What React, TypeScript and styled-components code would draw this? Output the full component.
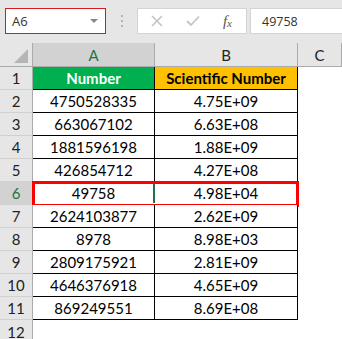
import React, { FunctionComponent } from 'react';
import styled, { createGlobalStyle } from 'styled-components';

const rows: [string, string][] = [
  ['4750528335', '4.75E+09'],
  ['663067102', '6.63E+08'],
  ['1881596198', '1.88E+09'],
  ['426854712', '4.27E+08'],
  ['49758', '4.98E+04'],
  ['2624103877', '2.62E+09'],
  ['8978', '8.98E+03'],
  ['2809175921', '2.81E+09'],
  ['4646376918', '4.65E+09'],
  ['869249551', '8.69E+08'],
];

const App: FunctionComponent = () => (
  <Sheet>
    <GlobalStyle />
    <FormulaBar>
      <NameBox>
        A6
        <DropArrow />
      </NameBox>
      <Grip>
        <i />
        <i />
        <i />
      </Grip>
      <ButtonBox>
        <svg width="12" height="12" viewBox="0 0 12 12">
          <path d="M1 1 L11 11 M11 1 L1 11" stroke="#c3c3c3" strokeWidth="1.6" fill="none" />
        </svg>
        <svg width="14" height="12" viewBox="0 0 14 12">
          <path d="M1 6 L5 10 L13 1.5" stroke="#c3c3c3" strokeWidth="1.8" fill="none" />
        </svg>
        <Fx>
          f<sub>x</sub>
        </Fx>
      </ButtonBox>
      <InputBox>49758</InputBox>
    </FormulaBar>

    <HeaderRow>
      <Corner>
        <svg width="16" height="16" viewBox="0 0 16 16">
          <path d="M15 1 L15 15 L1 15 Z" fill="#b5b5b5" />
        </svg>
      </Corner>
      <ColHead width={122} active>
        A
      </ColHead>
      <ColHead width={143}>B</ColHead>
      <ColHead width={44}>C</ColHead>
    </HeaderRow>

    <Row>
      <RowHead>1</RowHead>
      <Cell width={122} bg="#00b050" color="#ffffff" bold>
        Number
      </Cell>
      <Cell width={143} bg="#ffc000" bold>
        Scientific Number
      </Cell>
    </Row>
    {rows.map(([num, sci], i) => {
      const n = i + 2;
      const selected = n === 6;
      return (
        <Row key={n}>
          <RowHead active={selected}>{n}</RowHead>
          <Cell width={122}>
            {num}
            {selected && <SelectEdge />}
          </Cell>
          <Cell width={143}>{sci}</Cell>
          {selected && <Highlight />}
        </Row>
      );
    })}
    <Row>
      <RowHead plain>12</RowHead>
    </Row>
  </Sheet>
);

const GlobalStyle = createGlobalStyle`
  html, body {
    margin: 0;
    padding: 0;
    background: #ffffff;
    overflow: hidden;
  }
`;

const Sheet = styled.div`
  width: 342px;
  height: 339px;
  overflow: hidden;
  font-family: Lato, 'Open Sans', sans-serif;
`;

const FormulaBar = styled.div`
  height: 43px;
  background: #e6e6e6;
  display: flex;
  align-items: flex-start;
  padding-top: 8px;
  box-sizing: border-box;
  font-family: 'Open Sans', sans-serif;
  font-size: 12.5px;
  color: #333333;
`;

const NameBox = styled.div`
  margin-left: 5px;
  width: 101px;
  height: 26px;
  box-sizing: border-box;
  border: 1px solid #d41a1a;
  background: #ffffff;
  display: flex;
  align-items: center;
  justify-content: space-between;
  padding: 0 6px 0 6px;
  font-size: 13px;
`;

const DropArrow = styled.span`
  width: 0;
  height: 0;
  border-left: 4px solid transparent;
  border-right: 4px solid transparent;
  border-top: 4px solid #888888;
  margin-right: 1px;
`;

const Grip = styled.div`
  width: 31px;
  height: 26px;
  display: flex;
  flex-direction: column;
  align-items: center;
  justify-content: center;
  gap: 3px;

  i {
    width: 2px;
    height: 2px;
    background: #b4b4b4;
  }
`;

const ButtonBox = styled.div`
  width: 110px;
  height: 26px;
  box-sizing: border-box;
  border: 1px solid #d4d4d4;
  background: #ffffff;
  display: flex;
  align-items: center;
  justify-content: space-between;
  padding: 0 14px 0 13px;
`;

const Fx = styled.span`
  font-family: 'Liberation Serif', serif;
  font-style: italic;
  font-size: 15px;
  color: #555555;
  line-height: 1;

  sub {
    font-size: 11px;
    vertical-align: -1px;
  }
`;

const InputBox = styled.div`
  margin-left: 3px;
  flex: 1;
  height: 26px;
  box-sizing: border-box;
  border: 1px solid #d4d4d4;
  border-right: none;
  background: #ffffff;
  display: flex;
  align-items: center;
  padding-left: 11px;
`;

const HeaderRow = styled.div`
  display: flex;
  height: 23px;
  background: #e6e6e6;
  border-bottom: 1px solid #ababab;
  font-size: 15px;
  color: #222222;
`;

const Corner = styled.div`
  width: 33px;
  box-sizing: border-box;
  border-right: 1px solid #ababab;
  display: flex;
  align-items: flex-end;
  justify-content: flex-end;
  padding: 0 3px 2px 0;
`;

const ColHead = styled.div<{ width: number; active?: boolean }>`
  width: ${(p) => p.width}px;
  flex-shrink: 0;
  box-sizing: border-box;
  border-right: 1px solid #ababab;
  background: ${(p) => (p.active ? '#d2d2d2' : '#e6e6e6')};
  color: ${(p) => (p.active ? '#217346' : '#222222')};
  display: flex;
  align-items: center;
  justify-content: center;
`;

const Row = styled.div`
  position: relative;
  display: flex;
  height: 23px;
  font-size: 15px;
`;

const RowHead = styled.div<{ active?: boolean; plain?: boolean }>`
  width: 33px;
  flex-shrink: 0;
  box-sizing: border-box;
  border-right: 1px solid #ababab;
  border-bottom: ${(p) => (p.plain ? 'none' : '1px solid #d0d0d0')};
  background: ${(p) => (p.active ? '#d2d2d2' : '#e6e6e6')};
  color: ${(p) => (p.active ? '#217346' : '#222222')};
  display: flex;
  align-items: center;
  justify-content: center;
`;

const Cell = styled.div<{ width: number; bg?: string; color?: string; bold?: boolean }>`
  position: relative;
  width: ${(p) => p.width}px;
  flex-shrink: 0;
  box-sizing: border-box;
  border-right: 1px solid #000000;
  border-bottom: 1px solid #000000;
  background: ${(p) => p.bg ?? '#ffffff'};
  color: ${(p) => p.color ?? '#000000'};
  font-weight: ${(p) => (p.bold ? 700 : 400)};
  display: flex;
  align-items: center;
  justify-content: center;
`;

const SelectEdge = styled.span`
  position: absolute;
  right: -1px;
  top: 0;
  bottom: -1px;
  width: 2px;
  background: #217346;

  &::after {
    content: '';
    position: absolute;
    left: -2px;
    bottom: -2px;
    width: 6px;
    height: 4px;
    background: #217346;
    border: 1px solid #ffffff;
    box-sizing: border-box;
  }
`;

const Highlight = styled.span`
  position: absolute;
  left: 32px;
  top: -1px;
  width: 267px;
  height: 26px;
  box-sizing: border-box;
  border: 3px solid #ff0000;
  pointer-events: none;
`;

export default App;
